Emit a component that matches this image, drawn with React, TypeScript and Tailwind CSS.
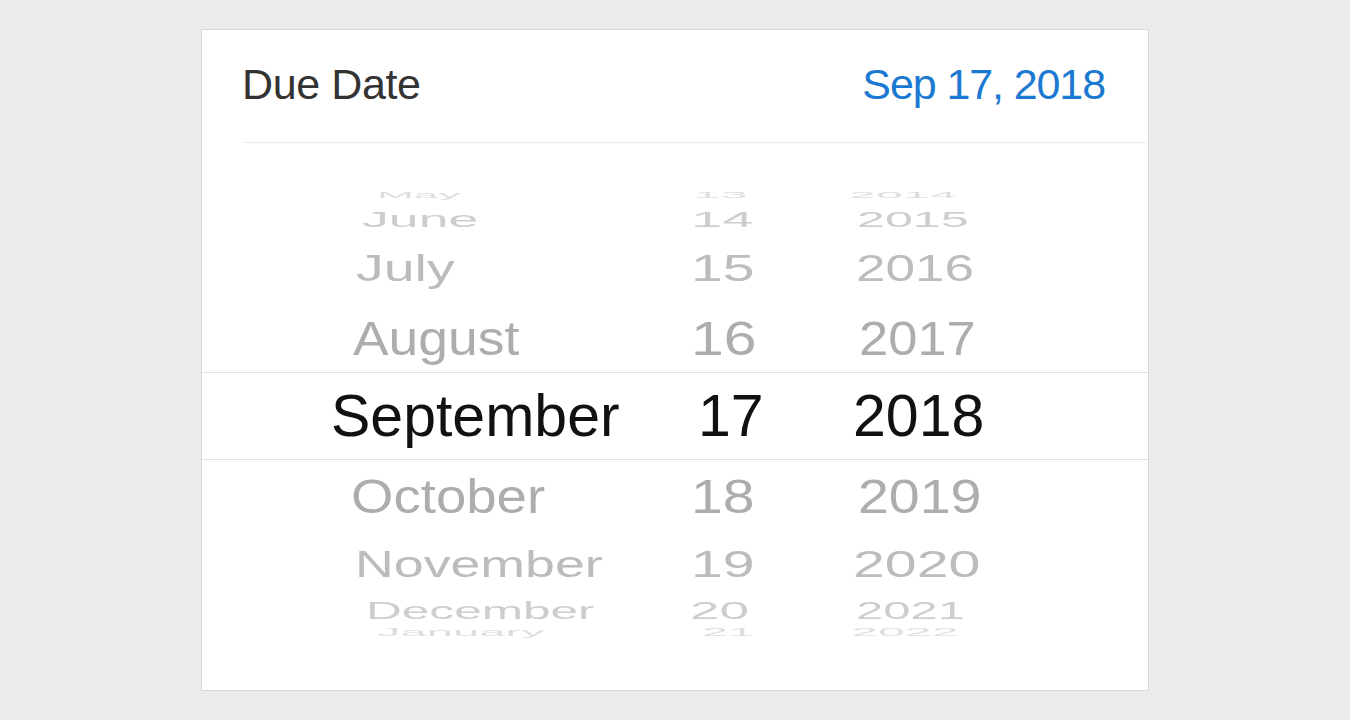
import React from "react";

type Row = {
  mt: string;
  c: string;
  m: string;
  mx: string;
  d: string;
  dx: string;
  y: string;
  yx: string;
};

const rows: Row[] = [
  {
    mt: "mt-[3px]",
    c: "text-[#dedede] blur-[0.6px]",
    m: "May",
    mx: "scale-x-[0.75] scale-y-[0.15] translate-x-[46px]",
    d: "13",
    dx: "scale-x-[0.84] scale-y-[0.15] translate-x-[-3px]",
    y: "2014",
    yx: "scale-x-[0.82] scale-y-[0.15] translate-x-[-4px]",
  },
  {
    mt: "mt-[24px]",
    c: "text-[#cdcdcd] blur-[0.4px]",
    m: "June",
    mx: "scale-x-[0.91] scale-y-[0.38] translate-x-[31px]",
    d: "14",
    dx: "scale-x-[0.95] scale-y-[0.38] translate-x-[-5px]",
    y: "2015",
    yx: "scale-x-[0.85] scale-y-[0.38] translate-x-[4px]",
  },
  {
    mt: "mt-[49px]",
    c: "text-[#bcbcbc] blur-[0.3px]",
    m: "July",
    mx: "scale-x-[0.94] scale-y-[0.64] translate-x-[25px]",
    d: "15",
    dx: "scale-x-[0.97] scale-y-[0.64] translate-x-[-5px]",
    y: "2016",
    yx: "scale-x-[0.9] scale-y-[0.64] translate-x-[3px]",
  },
  {
    mt: "mt-[70px]",
    c: "text-[#adadad] blur-[0.2px]",
    m: "August",
    mx: "scale-x-[0.905] scale-y-[0.83] translate-x-[22px]",
    d: "16",
    dx: "scale-x-[1] scale-y-[0.83] translate-x-[-5px]",
    y: "2017",
    yx: "scale-x-[0.89] scale-y-[0.83] translate-x-[6px]",
  },
  {
    mt: "mt-[78px]",
    c: "text-[#111111]",
    m: "September",
    mx: "",
    d: "17",
    dx: "translate-x-[2px]",
    y: "2018",
    yx: "",
  },
  {
    mt: "mt-[80px]",
    c: "text-[#adadad] blur-[0.2px]",
    m: "October",
    mx: "scale-x-[0.925] scale-y-[0.83] translate-x-[20px]",
    d: "18",
    dx: "scale-x-[0.97] scale-y-[0.83] translate-x-[-5px]",
    y: "2019",
    yx: "scale-x-[0.94] scale-y-[0.83] translate-x-[5px]",
  },
  {
    mt: "mt-[68px]",
    c: "text-[#bcbcbc] blur-[0.3px]",
    m: "November",
    mx: "scale-x-[0.91] scale-y-[0.62] translate-x-[24px]",
    d: "19",
    dx: "scale-x-[0.97] scale-y-[0.62] translate-x-[-5px]",
    y: "2020",
    yx: "scale-x-[0.97] scale-y-[0.62] translate-x-[0px]",
  },
  {
    mt: "mt-[47px]",
    c: "text-[#cdcdcd] blur-[0.4px]",
    m: "December",
    mx: "scale-x-[0.84] scale-y-[0.4] translate-x-[35px]",
    d: "20",
    dx: "scale-x-[0.9] scale-y-[0.4] translate-x-[-6px]",
    y: "2021",
    yx: "scale-x-[0.83] scale-y-[0.4] translate-x-[3px]",
  },
  {
    mt: "mt-[21px]",
    c: "text-[#dedede] blur-[0.6px]",
    m: "January",
    mx: "scale-x-[0.8] scale-y-[0.2] translate-x-[46px]",
    d: "21",
    dx: "scale-x-[0.8] scale-y-[0.2] translate-x-[6px]",
    y: "2022",
    yx: "scale-x-[0.82] scale-y-[0.2] translate-x-[-2px]",
  },
];

export default function App() {
  return (
    <div className="flex min-h-screen justify-center bg-[#ebebeb] pt-[29px] font-['Liberation_Sans',Arial,sans-serif]">
      <div className="flex h-[662px] w-[948px] flex-col border border-[#d9d9d9] bg-white">
        <div className="flex h-[112px] items-center justify-between pb-[3px] pl-[40px] pr-[43px]">
          <span className="text-[43px] leading-none tracking-[-0.4px] text-[#333333]">Due Date</span>
          <span className="text-[43px] leading-none tracking-[-1.1px] text-[#1c79d2]">Sep 17, 2018</span>
        </div>
        <div className="ml-[40px] h-px bg-[#ececec]" />
        <div className="relative flex-1">
          <div className="absolute left-0 right-0 top-[229px] h-[88px] border-y border-[#e2e2e2]" />
          <div className="mt-[49px] flex h-[446px] flex-col overflow-hidden pl-[129px]">
            {rows.map((r) => (
              <div key={r.m} className={`flex h-0 shrink-0 items-center ${r.mt} ${r.c}`}>
                <div className={`w-[365px] shrink-0 origin-left whitespace-nowrap text-[59px] leading-none ${r.mx}`}>{r.m}</div>
                <div className={`w-[157px] shrink-0 origin-left whitespace-nowrap text-[59px] leading-none ${r.dx}`}>{r.d}</div>
                <div className={`w-[200px] shrink-0 origin-left whitespace-nowrap text-[59px] leading-none ${r.yx}`}>{r.y}</div>
              </div>
            ))}
          </div>
        </div>
      </div>
    </div>
  );
}
